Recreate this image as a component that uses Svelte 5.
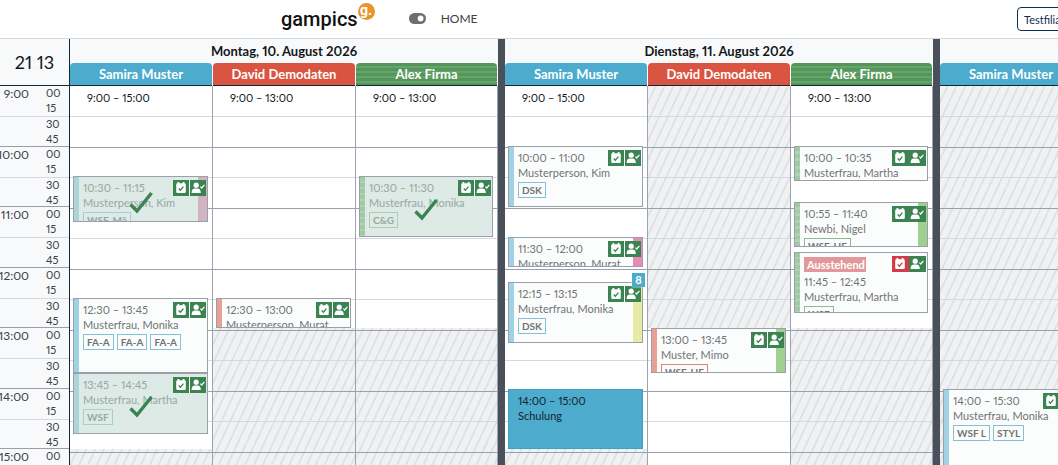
<script lang="ts">
  interface Span {
    from: string;
    to: string;
  }

  interface Appointment extends Span {
    name: string;
    tags?: string[];
    strip?: string;
    done?: boolean;
    pending?: boolean;
    joined?: boolean;
    solid?: boolean;
    count?: number;
  }

  interface Column {
    staff: string;
    tone: 'blue' | 'red' | 'green';
    hours?: string;
    closed: Span[];
    items: Appointment[];
  }

  interface Day {
    title: string;
    columns: Column[];
  }

  const PX_PER_MINUTE = 1.01;
  const DAY_START = 9 * 60;
  const hours = [9, 10, 11, 12, 13, 14, 15];

  const days: Day[] = [
    {
      title: 'Montag, 10. August 2026',
      columns: [
        {
          staff: 'Samira Muster',
          tone: 'blue',
          hours: '9:00 – 15:00',
          closed: [{ from: '15:00', to: '16:00' }],
          items: [
            { from: '10:30', to: '11:15', name: 'Musterperson, Kim', tags: ['WSF, Mä'], strip: 'mauve', done: true },
            { from: '12:30', to: '13:45', name: 'Musterfrau, Monika', tags: ['FA-A', 'FA-A', 'FA-A'] },
            { from: '13:45', to: '14:45', name: 'Musterfrau, Martha', tags: ['WSF'], done: true },
          ],
        },
        {
          staff: 'David Demodaten',
          tone: 'red',
          hours: '9:00 – 13:00',
          closed: [{ from: '13:00', to: '16:00' }],
          items: [{ from: '12:30', to: '13:00', name: 'Musterperson, Murat' }],
        },
        {
          staff: 'Alex Firma',
          tone: 'green',
          hours: '9:00 – 13:00',
          closed: [{ from: '13:00', to: '16:00' }],
          items: [{ from: '10:30', to: '11:30', name: 'Musterfrau, Monika', tags: ['C&G'], done: true }],
        },
      ],
    },
    {
      title: 'Dienstag, 11. August 2026',
      columns: [
        {
          staff: 'Samira Muster',
          tone: 'blue',
          hours: '9:00 – 15:00',
          closed: [{ from: '15:00', to: '16:00' }],
          items: [
            { from: '10:00', to: '11:00', name: 'Musterperson, Kim', tags: ['DSK'] },
            { from: '11:30', to: '12:00', name: 'Musterperson, Murat', strip: 'pink' },
            { from: '12:15', to: '13:15', name: 'Musterfrau, Monika', tags: ['DSK'], strip: 'lime', count: 8 },
            { from: '14:00', to: '15:00', name: 'Schulung', solid: true },
          ],
        },
        {
          staff: 'David Demodaten',
          tone: 'red',
          closed: [{ from: '9:00', to: '13:00' }],
          items: [{ from: '13:00', to: '13:45', name: 'Muster, Mimo', tags: ['WSF, HF'], strip: 'leaf' }],
        },
        {
          staff: 'Alex Firma',
          tone: 'green',
          hours: '9:00 – 13:00',
          closed: [{ from: '13:00', to: '16:00' }],
          items: [
            { from: '10:00', to: '10:35', name: 'Musterfrau, Martha', joined: true },
            { from: '10:55', to: '11:40', name: 'Newbi, Nigel', tags: ['WSF, HF'], strip: 'leaf', joined: true },
            { from: '11:45', to: '12:45', name: 'Musterfrau, Martha', tags: ['WSF'], pending: true, joined: true },
          ],
        },
      ],
    },
    {
      title: 'Mittwoch, 12. August 2026',
      columns: [
        {
          staff: 'Samira Muster',
          tone: 'blue',
          closed: [{ from: '9:00', to: '16:00' }],
          items: [{ from: '14:00', to: '15:30', name: 'Musterfrau, Monika', tags: ['WSF L', 'STYL'] }],
        },
        { staff: 'David Demodaten', tone: 'red', closed: [], items: [] },
        { staff: 'Alex Firma', tone: 'green', closed: [], items: [] },
      ],
    },
  ];

  function offset(time: string): number {
    const [h, m] = time.split(':').map(Number);
    return Math.floor((h * 60 + m - DAY_START) * PX_PER_MINUTE);
  }

  function place({ from, to }: Span): string {
    return `top: ${offset(from)}px; height: ${offset(to) - offset(from)}px`;
  }
</script>

{#snippet calendarIcon()}
  <svg viewBox="0 0 16 16" aria-hidden="true">
    <path d="M4.5 2h1.8v1.3h3.4V2h1.8v1.3q1.3 0 1.3 1.3v7.1q0 1.3-1.3 1.3h-7q-1.3 0-1.3-1.3V4.6q0-1.3 1.3-1.3z" fill="#fff" />
    <path d="M5.7 8.5l1.7 1.7 3-3.5" fill="none" stroke="currentColor" stroke-width="1.3" />
  </svg>
{/snippet}

{#snippet personIcon()}
  <svg viewBox="0 0 16 16" aria-hidden="true">
    <circle cx="6.2" cy="5.2" r="2.6" fill="#fff" />
    <path d="M1.6 13q0-4.4 3.4-4.4h2.4q3.4 0 3.4 4.4z" fill="#fff" />
    <path d="M10.4 6.7l1.3 1.3 2.7-3.2" fill="none" stroke="#fff" stroke-width="1.2" />
  </svg>
{/snippet}

<header class="topbar">
  <a class="logo" href="/" aria-label="gampics">
    <span class="logo-text">gampics</span>
    <span class="logo-badge">g.</span>
  </a>
  <button class="toggle" type="button" aria-label="Ansicht umschalten">
    <svg viewBox="0 0 18 12" aria-hidden="true">
      <rect width="17" height="11" rx="5.5" fill="#6c6e71" />
      <circle cx="11.6" cy="5.5" r="2.9" fill="#fff" />
    </svg>
  </button>
  <a class="home" href="/">HOME</a>
  <button class="branch" type="button">Testfiliale</button>
</header>

<main class="calendar">
  <aside class="times">
    <div class="clock">21<span class="colon">:</span>13</div>
    {#each hours as hour}
      <div class="hour">
        <div class="half">
          <span class="hour-label">{hour}:00</span>
          <div class="minutes"><span>00</span><span>15</span></div>
        </div>
        <div class="half">
          <div class="minutes"><span>30</span><span>45</span></div>
        </div>
      </div>
    {/each}
  </aside>

  {#each days as day}
    <section class="day">
      <h2>{day.title}</h2>
      <div class="columns">
        {#each day.columns as column}
          <div class="column {column.tone}">
            <h3>{column.staff}</h3>
            <div class="track">
              {#each column.closed as span}
                <div class="closed" style={place(span)}></div>
              {/each}
              {#each hours as hour (hour)}
                <div class="slot" class:first={hour === hours[0]}></div>
              {/each}
              {#if column.hours}
                <p class="opening">{column.hours}</p>
              {/if}
              {#each column.items as item}
                <article class="card" class:done={item.done} class:solid={item.solid} style={place(item)}>
                  <div class="body">
                    {#if item.strip}
                      <i class="strip {item.strip}"></i>
                    {/if}
                    <div class="text">
                      {#if item.pending}
                        <span class="pending">Ausstehend</span>
                      {/if}
                      <p>{item.from} – {item.to}</p>
                      <p>{item.name}</p>
                      {#if item.tags}
                        <div class="tags">
                          {#each item.tags as tag}
                            <span class="tag">{tag}</span>
                          {/each}
                        </div>
                      {/if}
                    </div>
                  </div>
                  {#if !item.solid}
                    <div class="badges" class:joined={item.joined}>
                      <span class="badge" class:alert={item.pending}>{@render calendarIcon()}</span>
                      <span class="badge">{@render personIcon()}</span>
                    </div>
                  {/if}
                  {#if item.done}
                    <svg class="check" viewBox="0 0 24 24" aria-hidden="true">
                      <path d="M1.5 14.5l6.5 6.5L22.5 3" />
                    </svg>
                  {/if}
                  {#if item.count}
                    <span class="count">{item.count}</span>
                  {/if}
                </article>
              {/each}
            </div>
          </div>
        {/each}
      </div>
    </section>
  {/each}
</main>

<style>
  :global(body) {
    overflow: hidden;
    background: #fff;
    color: #14171a;
    font-family: Lato, 'Open Sans', sans-serif;
    font-size: 11px;
    font-variant-numeric: proportional-nums;
  }

  h2,
  h3,
  p {
    margin: 0;
  }

  button {
    font: inherit;
    cursor: pointer;
  }

  .topbar {
    box-sizing: border-box;
    display: flex;
    align-items: center;
    height: 39px;
    padding-left: 281px;
    border-bottom: 1px solid #d5d8dd;
    overflow: hidden;
  }

  .logo {
    display: flex;
    align-items: flex-start;
    color: #111;
    text-decoration: none;
  }

  .logo-text {
    font-family: Roboto, sans-serif;
    font-size: 20px;
    font-weight: 500;
    line-height: 32px;
  }

  .logo-badge {
    width: 17px;
    height: 17px;
    border-radius: 50%;
    background: #e9952f;
    color: #fff;
    font-family: Roboto, sans-serif;
    font-size: 14px;
    font-weight: 700;
    line-height: 14px;
    text-align: center;
  }

  .toggle {
    width: 18px;
    height: 12px;
    margin-left: 34px;
    padding: 0;
    border: 0;
    background: none;
  }

  .toggle svg {
    display: block;
    width: 18px;
    height: 12px;
  }

  .home {
    margin-left: 14px;
    color: #3d4043;
    font-size: 12px;
    line-height: 16px;
    text-decoration: none;
  }

  .branch {
    flex: none;
    width: 90px;
    height: 24px;
    margin-left: auto;
    margin-right: -49px;
    padding: 0 6px;
    border: 1px solid #0c2f4d;
    border-radius: 4px;
    background: #fff;
    color: #0c2f4d;
    text-align: left;
  }

  .calendar {
    display: flex;
    height: calc(100vh - 39px);
    background: #f8f9fb;
    overflow: hidden;
  }

  .times {
    flex: none;
    width: 69px;
    border-right: 1px solid #10283a;
  }

  .clock {
    height: 46px;
    border-bottom: 1px solid #10283a;
    font-size: 18px;
    line-height: 46px;
    text-align: center;
  }

  .colon {
    color: #f1f2f4;
  }

  .hour {
    box-sizing: border-box;
    height: 61px;
    border-bottom: 1px solid #98a1ab;
    color: #3d4145;
    overflow: hidden;
  }

  .hour:nth-child(odd) {
    height: 60px;
  }

  .hour-label {
    font-size: 12px;
    line-height: 16px;
  }

  .half {
    box-sizing: border-box;
    display: flex;
    justify-content: flex-end;
    height: 31px;
    padding-right: 9px;
  }

  .half:first-child {
    border-bottom: 1px solid #d5d8de;
  }

  .minutes {
    width: 14px;
    margin-left: 17px;
  }

  .minutes span {
    display: block;
    line-height: 16px;
  }

  .minutes span:first-child {
    line-height: 14px;
  }

  .day {
    flex: none;
    width: 428px;
    border-right: 7px solid #495059;
  }

  h2 {
    height: 24px;
    font-size: 13px;
    font-weight: 700;
    line-height: 24px;
    text-align: center;
  }

  .columns {
    display: grid;
    grid-template-columns: 143px 143px 142px;
  }

  .column {
    --solid: #4dabcd;
    --soft: #a0d1e4;
    --edge: #83c1d9;
  }

  .column.red {
    --solid: #d95541;
    --soft: #ea9f94;
    --edge: #e08377;
  }

  .column.green {
    --solid: #549659;
    --soft: #a0c9a4;
    --edge: #8abb92;
  }

  h3 {
    height: 22px;
    margin-right: 1px;
    border-bottom: 1px solid #10283a;
    border-radius: 4px 4px 0 0;
    background: var(--solid);
    color: #fff;
    font-size: 13px;
    font-weight: 700;
    line-height: 22px;
    text-align: center;
  }

  .green h3 {
    background: repeating-linear-gradient(#549659 0 3px, #67a46b 3px 5px);
  }

  .track {
    position: relative;
    border-right: 1px solid #9ba3af;
    background: #fff;
  }

  .slot {
    position: relative;
    box-sizing: border-box;
    height: 61px;
    border-top: 1px solid #98a0ad;
  }

  .slot.first {
    border-color: transparent;
  }

  .slot::after {
    content: '';
    display: block;
    height: 29px;
    border-bottom: 1px solid #d5d8e0;
  }

  .closed {
    position: absolute;
    left: 0;
    right: 0;
    background: repeating-linear-gradient(115deg, #f0f1f2 0 6px, #e1e2e3 6px 8px);
  }

  .opening {
    position: absolute;
    top: 4px;
    left: 17px;
    line-height: 16px;
  }

  .card {
    position: absolute;
    left: 3px;
    right: 4px;
    box-sizing: border-box;
    border: 1px solid #98a1ab;
    background: #fbfdfc;
    color: #707376;
  }

  .body {
    position: relative;
    box-sizing: border-box;
    height: 100%;
    border-left: 5px solid var(--soft);
    overflow: hidden;
  }

  .green .body {
    border-image: repeating-linear-gradient(#a0c9a4 0 3px, #b0d3b3 3px 5px) 5;
    border-width: 0 0 0 5px;
  }

  .text {
    position: relative;
    padding: 3px 0 0 4px;
    line-height: 15px;
    white-space: nowrap;
  }

  .done {
    background: #deeae6;
    color: #94a9a1;
  }

  .done .body {
    border-color: #abd5d8;
  }

  .done .tag {
    border-color: #a3d1d2;
  }

  .green .done .tag {
    border-color: #abcfb1;
  }

  .solid {
    border-color: #3fa0c4;
    background: #4dabcd;
    color: #14242c;
  }

  .solid .body {
    border-color: transparent;
  }

  .strip {
    position: absolute;
    top: 0;
    right: 0;
    bottom: 0;
    width: 9px;
  }

  .mauve { background: #d2b3c2; }
  .pink { background: #e98bb9; }
  .lime { background: #e7eba4; }
  .leaf { background: #9fd090; }

  .tags {
    display: flex;
    gap: 3px;
    margin-top: 2px;
  }

  .tag {
    padding: 0 3px;
    border: 1px solid var(--edge);
    font-size: 10px;
    font-weight: 700;
    line-height: 14px;
  }

  .pending {
    display: block;
    width: 56px;
    margin: 1px 0 2px;
    padding: 0 3px;
    background: #e4979b;
    color: #fff;
    font-weight: 700;
    line-height: 15px;
  }

  .badges {
    position: absolute;
    top: 3px;
    right: 1px;
    display: flex;
    gap: 1px;
    background: #fff;
  }

  .joined {
    gap: 0;
  }

  .badge {
    width: 16px;
    height: 16px;
    background: #3b8350;
    color: #3b8350;
  }

  .joined .badge {
    width: 17px;
  }

  .badge.alert {
    background: #d23c48;
    color: #d23c48;
  }

  .badge svg {
    display: block;
    width: 16px;
    height: 16px;
  }

  .check {
    position: absolute;
    inset: 5px 0 0 0;
    width: 24px;
    height: 24px;
    margin: auto;
    fill: none;
    stroke: #3b8350;
    stroke-width: 3.4;
  }

  .count {
    position: absolute;
    top: -10px;
    right: -3px;
    width: 13px;
    height: 14px;
    background: #4dabcd;
    box-shadow: 0 0 2px #fff;
    color: #fff;
    font-weight: 700;
    line-height: 13px;
    text-align: center;
  }
</style>
